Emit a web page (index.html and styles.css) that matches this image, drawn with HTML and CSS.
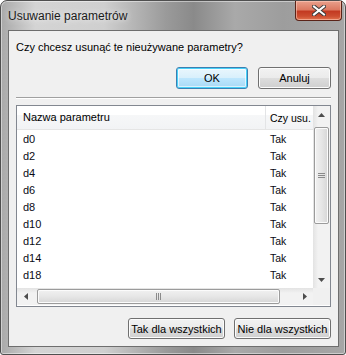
FILE: index.html
```html
<!DOCTYPE html>
<html lang="pl">
<head>
    <meta charset="UTF-8">
    <title>Usuwanie parametrów</title>
    <link rel="stylesheet" href="styles.css">
</head>
<body>
    <!-- Dialog window -->
    <div class="window">
        <div class="titlebar">
            <span class="title">Usuwanie parametrów</span>
            <div class="close">
                <svg width="14" height="11" viewBox="0 0 14 11">
                    <path d="M2 1.5 L12 9.5 M12 1.5 L2 9.5" stroke="#3b3b3b" stroke-width="4" stroke-linecap="square"/>
                    <path d="M2 1.5 L12 9.5 M12 1.5 L2 9.5" stroke="#ffffff" stroke-width="2" stroke-linecap="square"/>
                </svg>
            </div>
        </div>

        <div class="client">
            <p class="question">Czy chcesz usunąć te nieużywane parametry?</p>

            <div class="actions top-actions">
                <button class="btn btn-default">OK</button>
                <button class="btn">Anuluj</button>
            </div>

            <div class="separator"></div>

            <!-- List of parameters -->
            <div class="listview">
                <div class="lv-main">
                    <div class="lv-body">
                        <div class="lv-header">
                            <div class="col col-name">Nazwa parametru</div>
                            <div class="col col-del">Czy usu.</div>
                        </div>
                        <div class="lv-rows">
                            <div class="row"><div class="col col-name">d0</div><div class="col col-del">Tak</div></div>
                            <div class="row"><div class="col col-name">d2</div><div class="col col-del">Tak</div></div>
                            <div class="row"><div class="col col-name">d4</div><div class="col col-del">Tak</div></div>
                            <div class="row"><div class="col col-name">d6</div><div class="col col-del">Tak</div></div>
                            <div class="row"><div class="col col-name">d8</div><div class="col col-del">Tak</div></div>
                            <div class="row"><div class="col col-name">d10</div><div class="col col-del">Tak</div></div>
                            <div class="row"><div class="col col-name">d12</div><div class="col col-del">Tak</div></div>
                            <div class="row"><div class="col col-name">d14</div><div class="col col-del">Tak</div></div>
                            <div class="row"><div class="col col-name">d18</div><div class="col col-del">Tak</div></div>
                        </div>
                    </div>
                    <div class="vscroll">
                        <div class="arrow">
                            <svg width="7" height="4" viewBox="0 0 7 4"><path d="M0 4 L3.5 0 L7 4 Z" fill="#4d4d4d"/></svg>
                        </div>
                        <div class="vtrack">
                            <div class="thumb vthumb">
                                <svg width="7" height="7" viewBox="0 0 7 7"><path d="M0 1.5 H7 M0 3.5 H7 M0 5.5 H7" stroke="#8a8a8a" stroke-width="1"/></svg>
                            </div>
                        </div>
                        <div class="arrow">
                            <svg width="7" height="4" viewBox="0 0 7 4"><path d="M0 0 L7 0 L3.5 4 Z" fill="#4d4d4d"/></svg>
                        </div>
                    </div>
                </div>
                <div class="lv-bottom">
                    <div class="hscroll">
                        <div class="arrow">
                            <svg width="4" height="7" viewBox="0 0 4 7"><path d="M4 0 L4 7 L0 3.5 Z" fill="#4d4d4d"/></svg>
                        </div>
                        <div class="htrack">
                            <div class="thumb hthumb">
                                <svg width="7" height="7" viewBox="0 0 7 7"><path d="M1.5 0 V7 M3.5 0 V7 M5.5 0 V7" stroke="#8a8a8a" stroke-width="1"/></svg>
                            </div>
                        </div>
                        <div class="arrow">
                            <svg width="4" height="7" viewBox="0 0 4 7"><path d="M0 0 L4 3.5 L0 7 Z" fill="#4d4d4d"/></svg>
                        </div>
                    </div>
                    <div class="corner"></div>
                </div>
            </div>

            <div class="actions bottom-actions">
                <button class="btn btn-wide">Tak dla wszystkich</button>
                <button class="btn btn-wide">Nie dla wszystkich</button>
            </div>
        </div>
    </div>
</body>
</html>
```

FILE: styles.css
```css
body {
    margin: 0;
    background: #ffffff;
    font-family: "Liberation Sans", Arial, sans-serif;
    font-size: 11px;
    color: #000000;
}

/* Window frame */
.window {
    width: 346px;
    height: 355px;
    box-sizing: border-box;
    border: 1px solid #4f4f4f;
    border-radius: 7px 7px 3px 3px;
    background: linear-gradient(90deg, #a9a9a9 0%, #d4d4d4 10%, #cfcfcf 30%, #9a9a9a 48%, #8a8a8a 56%, #a9a9a9 68%, #9d9d9d 82%, #a6a6a6 100%);
    padding: 0 6px 7px 7px;
    display: flex;
    flex-direction: column;
    box-shadow: inset 0 0 0 1px rgba(255, 255, 255, 0.45);
}

.titlebar {
    height: 29px;
    display: flex;
    align-items: flex-start;
    flex-shrink: 0;
}

.title {
    font-size: 12px;
    color: #1b1b1b;
    margin-top: 8px;
    text-shadow: 0 0 6px rgba(255, 255, 255, 0.9);
}

.close {
    margin-left: auto;
    margin-right: -3px;
    width: 47px;
    height: 20px;
    box-sizing: border-box;
    border: 1px solid #5a2318;
    border-top: none;
    border-radius: 0 0 4px 4px;
    background: linear-gradient(180deg, #e9a08c 0%, #dc7a62 45%, #c33a22 55%, #cc4d30 80%, #e2734f 100%);
    box-shadow: inset 0 0 0 1px rgba(255, 210, 195, 0.55);
    display: flex;
    align-items: center;
    justify-content: center;
}

/* Client area */
.client {
    flex: 1;
    border: 1px solid #6e6e6e;
    background: #f0f0f0;
    padding: 8px 7px 0 7px;
    display: flex;
    flex-direction: column;
}

.question {
    margin: 0;
    line-height: 16px;
    font-size: 11px;
}

.actions {
    display: flex;
    justify-content: flex-end;
    gap: 10px;
}

.top-actions {
    margin-top: 12px;
}

.bottom-actions {
    margin-top: 11px;
    gap: 9px;
}

.btn {
    font-family: "Liberation Sans", Arial, sans-serif;
    font-size: 11px;
    color: #000000;
    height: 22px;
    width: 73px;
    padding: 0 4px;
    border: 1px solid #707070;
    border-radius: 3px;
    background: linear-gradient(180deg, #f2f2f2 0%, #ebebeb 48%, #dddddd 52%, #cfcfcf 100%);
    box-shadow: inset 0 0 0 1px #fcfcfc;
}

.btn-default {
    width: 72px;
    border-color: #3c7fb1;
    box-shadow: inset 0 0 0 1px #48d1f9, inset 0 0 0 2px rgba(255, 255, 255, 0.6);
    background: linear-gradient(180deg, #eaf6fd 0%, #d9f0fc 48%, #bee6fd 52%, #a7d9f5 100%);
}

.btn-wide {
    width: 97px;
    height: 21px;
    padding: 0;
}

.separator {
    margin-top: 8px;
    height: 1px;
    border-top: 1px solid #a0a0a0;
    background: #ffffff;
}

/* List view */
.listview {
    margin-top: 6px;
    height: 202px;
    box-sizing: border-box;
    border: 1px solid #828790;
    background: #ffffff;
    display: flex;
    flex-direction: column;
}

.lv-main {
    height: 182px;
    display: flex;
}

.lv-body {
    flex: 1;
    overflow: hidden;
}

.lv-header {
    height: 23px;
    display: flex;
    align-items: center;
    border-bottom: 1px solid #e5e5e5;
    background: linear-gradient(180deg, #ffffff 0%, #ffffff 40%, #f6f7f8 41%, #f2f3f5 100%);
    color: #000000;
}

.lv-header .col-name {
    border-right: 1px solid #e3e4e6;
    height: 23px;
    line-height: 23px;
}

.lv-rows {
    padding-top: 1px;
}

.row {
    display: flex;
    height: 17px;
    line-height: 17px;
    color: #0a0a14;
}

.col {
    flex-shrink: 0;
    white-space: nowrap;
    box-sizing: border-box;
}

.col-name {
    width: 249px;
    padding-left: 6px;
    overflow: hidden;
}

.col-del {
    width: 47px;
    padding-left: 4px;
    font-size: 10.5px;
}

/* Scrollbars */
.vscroll {
    width: 17px;
    display: flex;
    flex-direction: column;
    background: linear-gradient(90deg, #e3e3e3 0%, #f2f2f2 30%, #f2f2f2 100%);
}

.arrow {
    width: 17px;
    height: 17px;
    display: flex;
    align-items: center;
    justify-content: center;
    flex-shrink: 0;
}

.vtrack {
    flex: 1;
    padding: 4px 1px 47px 1px;
    display: flex;
}

.thumb {
    flex: 1;
    border: 1px solid #9b9b9b;
    border-radius: 2px;
    display: flex;
    align-items: center;
    justify-content: center;
    box-shadow: inset 0 0 0 1px #fbfbfb;
}

.vthumb {
    background: linear-gradient(90deg, #f1f1f1 0%, #e6e6e6 50%, #d6d6d6 100%);
}

.lv-bottom {
    height: 17px;
    display: flex;
}

.hscroll {
    flex: 1;
    display: flex;
    background: linear-gradient(180deg, #e3e3e3 0%, #f2f2f2 30%, #f2f2f2 100%);
}

.htrack {
    flex: 1;
    padding: 1px 16px 1px 3px;
    display: flex;
}

.hthumb {
    background: linear-gradient(180deg, #f1f1f1 0%, #e6e6e6 50%, #d6d6d6 100%);
}

.corner {
    width: 17px;
    background: #f0f0f0;
}
```
